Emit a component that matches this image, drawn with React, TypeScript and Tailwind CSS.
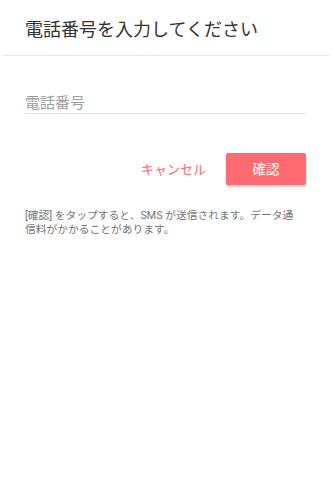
export default function App() {
  return (
    <div
      className="min-h-[494px] w-[332px] bg-white"
      style={{ fontFamily: 'Roboto, "Noto Sans CJK JP", sans-serif' }}
    >
      {/* Header */}
      <div className="mx-[3px] flex h-[56px] items-center border-b border-[#e5e5e5] px-[22px] pt-[4px]">
        <h1 className="text-[18px] leading-none text-[#333333]">電話番号を入力してください</h1>
      </div>

      {/* Form */}
      <div className="px-[25px] pt-[37px]">
        <div className="mr-[1px] border-b border-[#e0e0e0]">
          <input
            type="tel"
            placeholder="電話番号"
            className="block h-[20px] w-full bg-transparent text-[15px] leading-[20px] text-[#333333] outline-none placeholder:text-[#9e9e9e]"
          />
        </div>

        <div className="mt-[39px] flex items-center justify-end gap-[20px] pr-[1px]">
          <button className="text-[13px] leading-none text-[#f8696e]">キャンセル</button>
          <button className="flex h-[32px] w-[80px] items-center justify-center rounded-[2px] bg-[#ff6b70] text-[13.5px] text-white shadow-[0_2px_2px_rgba(0,0,0,0.2)]">
            確認
          </button>
        </div>

        <p className="mt-[24px] pr-[4px] text-[10.75px] leading-[14px] text-[#757575]">
          [確認] をタップすると、SMS が送信されます。データ通信料がかかることがあります。
        </p>
      </div>
    </div>
  )
}
